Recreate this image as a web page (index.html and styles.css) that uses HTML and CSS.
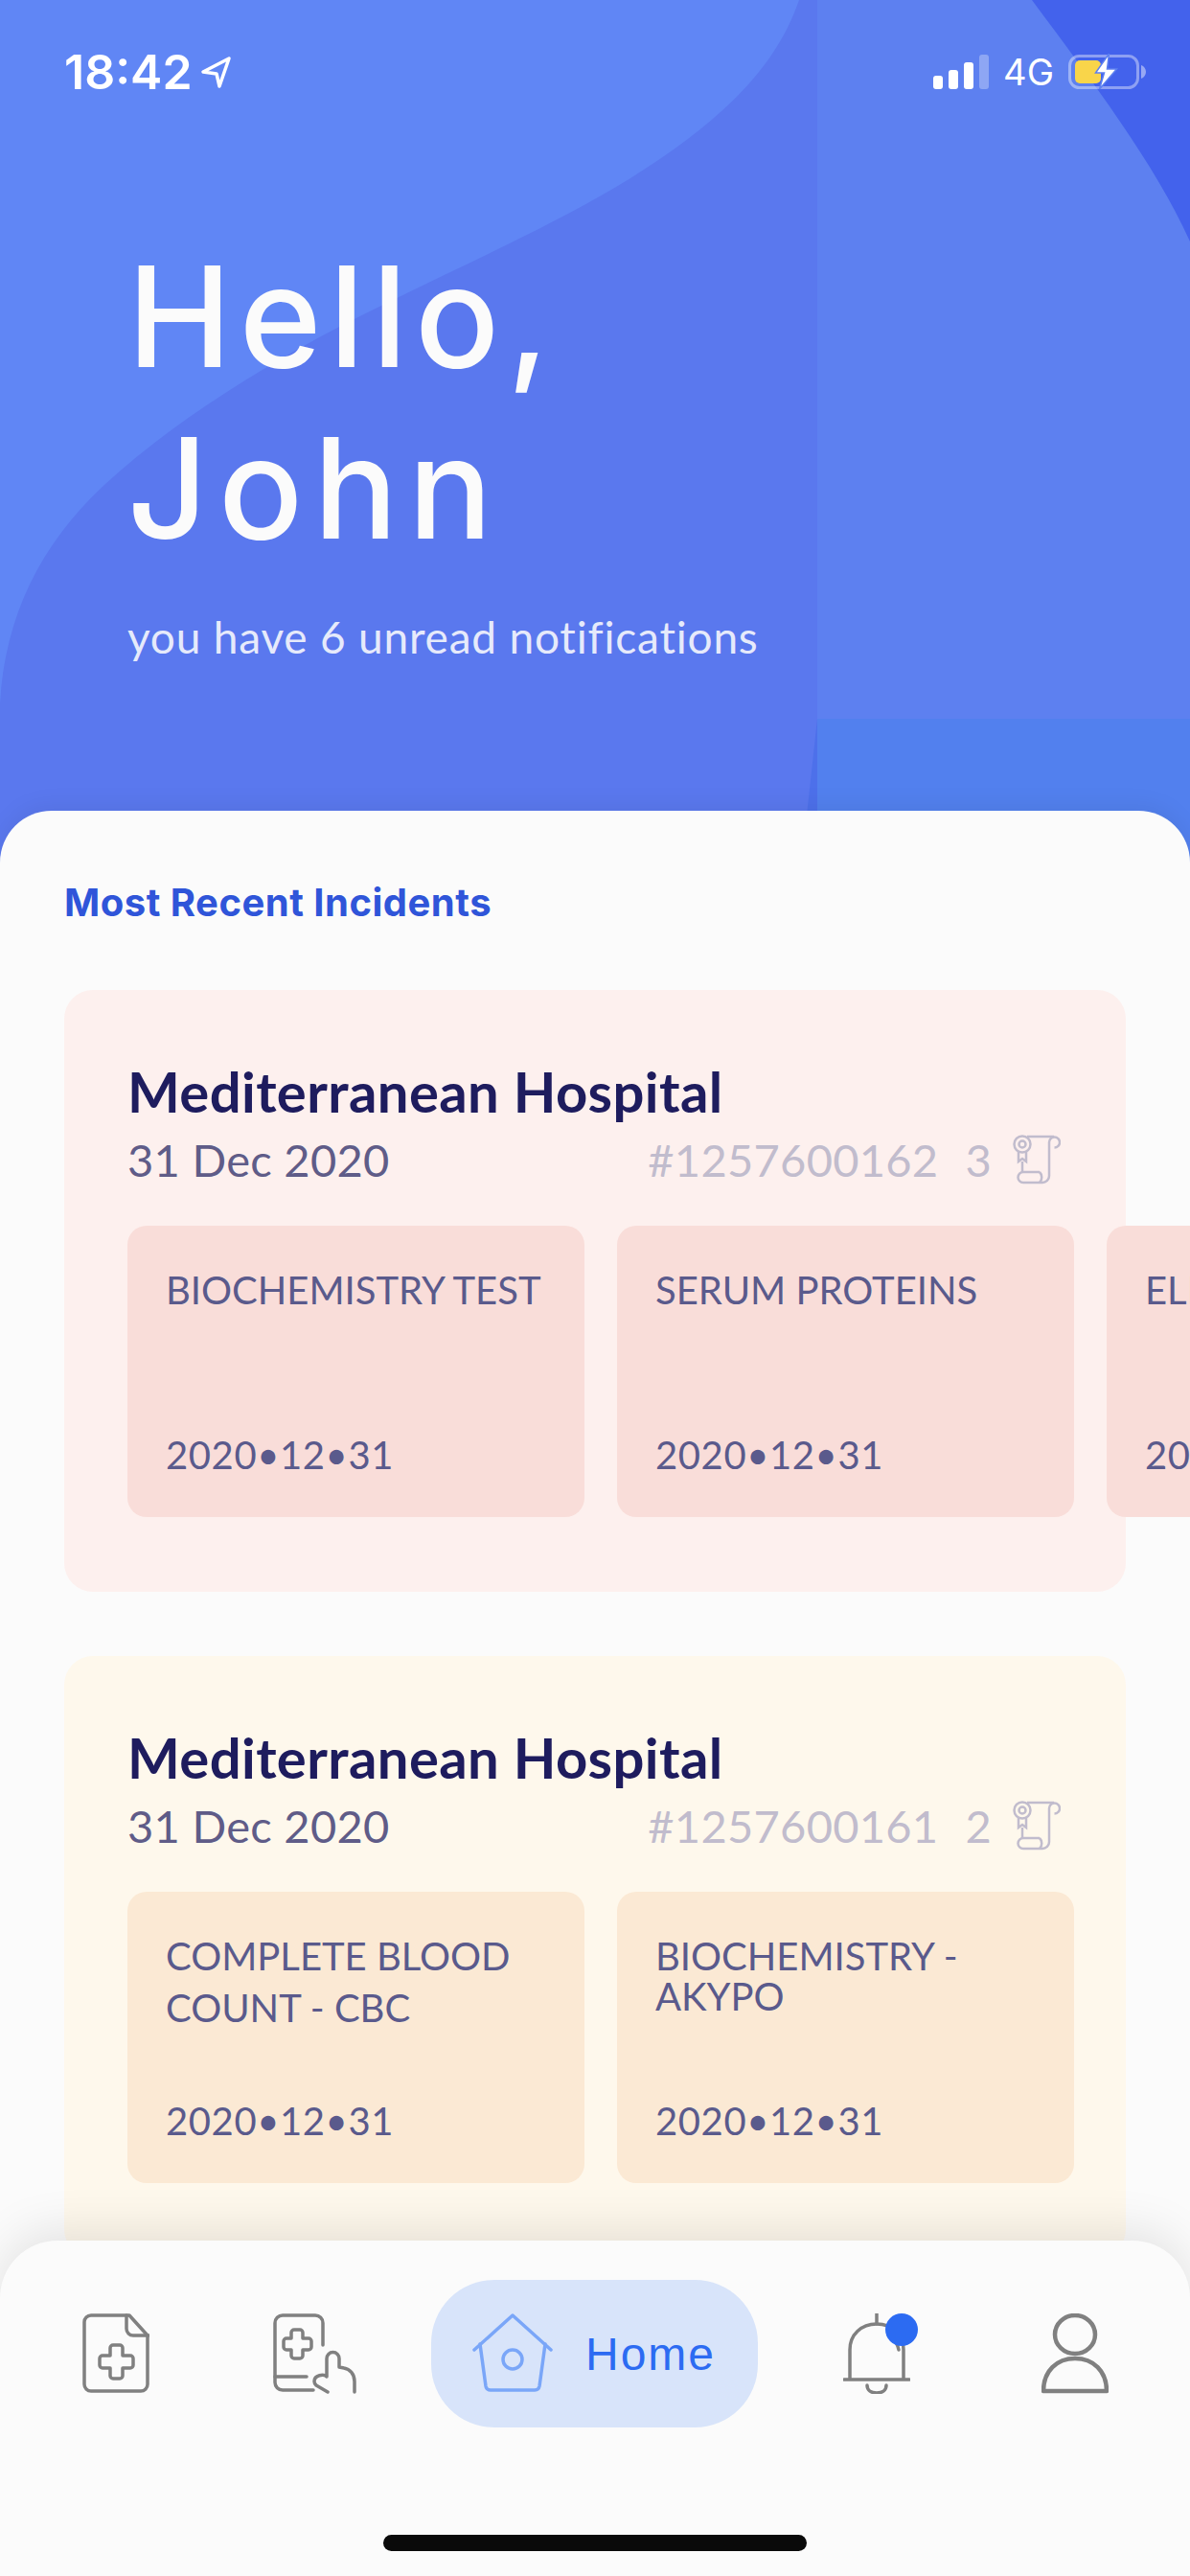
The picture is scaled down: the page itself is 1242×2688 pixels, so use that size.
FILE: index.html
```html
<!DOCTYPE html>
<html lang="en">
<head>
<meta charset="utf-8">
<title>Home</title>
<link rel="stylesheet" href="styles.css">
</head>
<body>
<div class="screen">
  <header class="hero">
    <svg class="blobs" viewBox="0 0 1242 906" preserveAspectRatio="none" aria-hidden="true">
      <rect x="853" width="389" height="750" fill="#5d80f0"/>
      <rect x="853" y="750" width="389" height="156" fill="#5280ee"/>
      <path d="M834 0C810 70 755 125 658 186C560 246 440 295 335 351C250 397 170 450 110 505C45 565 5 640 0 735V0Z" fill="#6086f5"/>
      <path d="M1077 0C1140 85 1205 170 1242 252V0Z" fill="#4362ec"/>
      <path d="M853 750L853 906H836Z" fill="#4d70ea"/>
    </svg>
    <div class="status">
      <div class="status-left">
        <span class="clock">18:42</span>
        <svg class="locate" viewBox="0 0 34 36" aria-hidden="true"><path d="M31 4L4 18L18 20L21 33Z"/></svg>
      </div>
      <div class="status-right">
        <div class="signal"><i class="b1"></i><i class="b2"></i><i class="b3"></i><i class="b4"></i></div>
        <span class="net">4G</span>
        <svg class="battery" viewBox="0 0 82 38" aria-hidden="true">
          <rect class="bat-shell" x="1.500" y="2.500" width="71" height="33" rx="10"/>
          <path class="bat-nub" d="M76 12c3 1 5 4 5 7s-2 6-5 7Z"/>
          <rect class="bat-fill" x="7" y="7" width="27" height="24" rx="5"/>
          <path class="bat-bolt" d="M42.500 0L28.500 20H37.500L32.500 37L50.500 16H40.500Z"/>
        </svg>
      </div>
    </div>
    <h1 class="greeting">Hello,<br><span class="greeting-name">John</span></h1>
    <p class="unread">you have 6 unread notifications</p>
  </header>

  <main class="sheet">
    <h2 class="section-title">Most Recent Incidents</h2>

    <article class="card card-rose">
      <h3 class="hospital">Mediterranean Hospital</h3>
      <div class="meta">
        <span class="date">31 Dec 2020</span>
        <span class="ref">#1257600162</span>
        <span class="count">3</span>
        <svg class="cert" viewBox="0 0 50 52" aria-hidden="true"><use href="#cert-icon"/></svg>
      </div>
      <div class="tiles">
        <div class="tile"><span class="tile-name">BIOCHEMISTRY TEST</span><span class="tile-date">2020•12•31</span></div>
        <div class="tile"><span class="tile-name">SERUM PROTEINS</span><span class="tile-date">2020•12•31</span></div>
        <div class="tile"><span class="tile-name">ELECTROLYTES</span><span class="tile-date">2020•12•31</span></div>
      </div>
    </article>

    <article class="card card-cream">
      <h3 class="hospital">Mediterranean Hospital</h3>
      <div class="meta">
        <span class="date">31 Dec 2020</span>
        <span class="ref">#1257600161</span>
        <span class="count">2</span>
        <svg class="cert" viewBox="0 0 50 52" aria-hidden="true"><use href="#cert-icon"/></svg>
      </div>
      <div class="tiles">
        <div class="tile"><span class="tile-name loose">COMPLETE BLOOD COUNT - CBC</span><span class="tile-date">2020•12•31</span></div>
        <div class="tile"><span class="tile-name">BIOCHEMISTRY - AKYPO</span><span class="tile-date">2020•12•31</span></div>
      </div>
    </article>
  </main>

  <nav class="tabbar">
    <div class="tabs">
      <svg class="tab-icon doc" viewBox="0 0 70 84" aria-hidden="true">
        <path d="M9 2H49L68 23V74a7 7 0 0 1-7 7H9a7 7 0 0 1-7-7V9a7 7 0 0 1 7-7Z"/>
        <path d="M46 2V16a7 7 0 0 0 7 7H69"/>
        <path d="M29 36a3 3 0 0 1 3-3h7a3 3 0 0 1 3 3v8h8a3 3 0 0 1 3 3v7a3 3 0 0 1-3 3h-8v8a3 3 0 0 1-3 3h-7a3 3 0 0 1-3-3v-8h-8a3 3 0 0 1-3-3v-7a3 3 0 0 1 3-3h8z"/>
      </svg>
      <svg class="tab-icon phone" viewBox="0 0 88 84" aria-hidden="true">
        <path d="M52 33V10a8 8 0 0 0-8-8H10a8 8 0 0 0-8 8V72a8 8 0 0 0 8 8H42"/>
        <path d="M2 66H35"/>
        <path d="M22 17a3 3 0 0 0-3 3v6h-5a3 3 0 0 0-3 3v6a3 3 0 0 0 3 3h5v6a3 3 0 0 0 3 3h6a3 3 0 0 0 3-3v-6h6a3 3 0 0 0 3-3v-6a3 3 0 0 0-3-3h-6v-6a3 3 0 0 0-3-3Z"/>
        <path d="M85 82V71c0-8-5-13-11-14l-5-1V47a6.500 6.500 0 0 0-13 0V66c-3-3-13-2-13 5 0 2 1 3 2 4l12 7"/>
      </svg>
      <div class="pill">
        <svg class="tab-icon home" viewBox="0 0 84 84" aria-hidden="true">
          <path d="M2 38L42 2L82 38"/>
          <path d="M8 32L14 76a5 5 0 0 0 5 4H65a5 5 0 0 0 5-4L76 32"/>
          <circle cx="42" cy="48" r="10"/>
        </svg>
        <span class="pill-label">Home</span>
      </div>
      <div class="bell-wrap">
        <svg class="tab-icon bell" viewBox="0 0 70 84" aria-hidden="true">
          <path d="M35 0V11"/>
          <path d="M7 68V38C7 22 19 11 35 11S63 22 63 38V68"/>
          <path d="M1 69H69"/>
          <path d="M25 75c0 5 4 8 10 8s10-3 10-8"/>
          <path d="M50 25c4 3 7 7 8 13"/>
        </svg>
        <span class="badge"></span>
      </div>
      <svg class="tab-icon person" viewBox="0 0 70 84" aria-hidden="true">
        <ellipse cx="35" cy="22" rx="21" ry="20"/>
        <path d="M2 81C2 60 16 47 35 47S68 60 68 81Z"/>
      </svg>
    </div>
    <div class="home-bar"></div>
  </nav>

  <svg class="defs" aria-hidden="true">
    <symbol id="cert-icon" viewBox="0 0 50 52">
      <circle cx="10" cy="10" r="8.500"/>
      <circle cx="10" cy="10" r="3.500"/>
      <path d="M6 18V28l4-3 4 3V18"/>
      <path d="M10 28V39"/>
      <path d="M15 2H43"/>
      <path d="M38 8a5.500 5.500 0 1 1 5.500 5.500"/>
      <path d="M38 8V43a7 7 0 0 1-7 7"/>
      <path d="M31 50H11a5.500 5.500 0 0 1 0-11H28"/>
      <path d="M28 39c3 3 3 8 0 11"/>
    </symbol>
  </svg>
</div>
</body>
</html>
```
FILE: styles.css
```css
* { box-sizing: border-box; }

html, body {
  margin: 0;
  padding: 0;
}

.screen {
  position: relative;
  width: 1242px;
  height: 2688px;
  overflow: hidden;
  background: #fbfbfb;
  font-family: "Lato", "Noto Sans", sans-serif;
}

.defs {
  position: absolute;
  width: 0;
  height: 0;
}

/* Hero */
.hero {
  position: relative;
  height: 906px;
  padding: 50px 45px 0 67px;
  background: #5a78ee;
  color: #fff;
}

.blobs {
  position: absolute;
  inset: 0;
  width: 100%;
  height: 100%;
}

.status {
  position: relative;
  display: flex;
  justify-content: space-between;
  align-items: center;
  height: 50px;
}

.status-left,
.status-right {
  display: flex;
  align-items: center;
}

.clock {
  font-family: "Inter", sans-serif;
  font-size: 50px;
  font-weight: 600;
  line-height: 50px;
}

.locate {
  width: 34px;
  height: 36px;
  margin-left: 7px;
  fill: none;
  stroke: #fff;
  stroke-width: 3.500;
  stroke-linejoin: round;
}

.signal {
  display: flex;
  align-items: flex-end;
  gap: 6px;
  height: 36px;
}

.signal i {
  display: block;
  width: 10px;
  border-radius: 3px;
  background: #fff;
}

.signal .b1 { height: 14px; }
.signal .b2 { height: 20px; }
.signal .b3 { height: 28px; }
.signal .b4 { height: 36px; background: rgba(255, 255, 255, 0.3); }

.net {
  margin-left: 15px;
  font-family: "Inter", sans-serif;
  font-size: 38px;
  line-height: 50px;
}

.battery {
  width: 82px;
  height: 38px;
  margin-left: 15px;
}

.bat-shell {
  fill: none;
  stroke: rgba(255, 255, 255, 0.4);
  stroke-width: 3;
}

.bat-nub { fill: rgba(255, 255, 255, 0.45); }
.bat-fill { fill: #f9d54a; }

.bat-bolt {
  fill: #fff;
  stroke: #5d80f0;
  stroke-width: 1.500;
}

.greeting {
  position: relative;
  margin: 141px 0 0 66px;
  font-family: "Inter", sans-serif;
  font-size: 146px;
  font-weight: 550;
  line-height: 179px;
  letter-spacing: 8px;
  color: #fbfbfb;
}

.greeting-name { letter-spacing: 11px; }

.unread {
  position: relative;
  margin: 39px 0 0 66px;
  font-size: 46px;
  line-height: 54px;
  letter-spacing: 0.800px;
  color: #e6eafb;
}

/* Sheet */
.sheet {
  position: relative;
  height: 1842px;
  margin-top: -60px;
  padding: 0 67px;
  overflow: hidden;
  border-radius: 54px 54px 0 0;
  background: #fbfbfb;
  box-shadow: 0 -6px 24px rgba(0, 0, 0, 0.06);
}

.section-title {
  margin: 0;
  padding-top: 72px;
  font-family: "Inter", sans-serif;
  font-size: 40px;
  font-weight: 700;
  line-height: 48px;
  letter-spacing: 0.500px;
  color: #2f55d9;
}

.card {
  height: 628px;
  margin-top: 67px;
  padding: 71px 0 0 66px;
  border-radius: 30px;
}

.card-rose { background: #fdf0ee; }
.card-cream { background: #fef8ec; }

.card-rose .tile { background: #f9ddd9; }
.card-cream .tile { background: #fbe9d4; }

.hospital {
  margin: 0;
  font-size: 58px;
  font-weight: 700;
  line-height: 70px;
  letter-spacing: 0.400px;
  color: #1e1c5e;
}

.meta {
  display: flex;
  align-items: center;
  height: 56px;
  margin-top: 8px;
  padding-right: 68px;
  font-size: 47px;
  line-height: 56px;
  letter-spacing: 0.300px;
}

.date {
  flex: 1;
  color: #5f5c88;
}

.ref { color: #c1bccd; }

.count {
  margin-left: 28px;
  color: #c1bccd;
}

.cert {
  width: 50px;
  height: 52px;
  margin-left: 22px;
  fill: none;
  stroke: #c1bccd;
  stroke-width: 2.500;
}

.tiles {
  display: flex;
  gap: 34px;
  margin-top: 41px;
  margin-right: -67px;
  overflow: hidden;
}

.tile {
  display: flex;
  flex: 0 0 477px;
  flex-direction: column;
  justify-content: space-between;
  height: 304px;
  padding: 46px 30px 41px 40px;
  border-radius: 20px;
  font-size: 40px;
  color: #5a5a8c;
}

.tile-name {
  display: block;
  line-height: 42px;
}

.tile-name.loose {
  margin-top: -6px;
  line-height: 54px;
}

.tile-date {
  display: block;
  line-height: 48px;
  letter-spacing: 0.600px;
}

/* Tab bar */
.tabbar {
  position: absolute;
  left: 0;
  right: 0;
  bottom: 0;
  height: 350px;
  padding-top: 41px;
  border-radius: 60px 60px 0 0;
  background: #fbfbfb;
  box-shadow: 0 -10px 50px rgba(0, 0, 0, 0.1);
}

.tabs {
  display: flex;
  align-items: center;
  height: 154px;
  padding-left: 86px;
}

.tab-icon {
  flex: none;
  height: 84px;
  fill: none;
  stroke: #808080;
  stroke-width: 3.500;
  stroke-linecap: round;
  stroke-linejoin: round;
}

.doc { width: 70px; }

.phone {
  width: 88px;
  margin-left: 129px;
}

.pill {
  display: flex;
  flex: none;
  align-items: center;
  width: 341px;
  height: 154px;
  margin-left: 77px;
  padding-left: 43px;
  border-radius: 66px;
  background: #d8e4fa;
}

.home {
  width: 84px;
  stroke: #7aa6f8;
}

.pill-label {
  margin-left: 34px;
  font-family: "Liberation Sans", sans-serif;
  font-size: 48px;
  letter-spacing: 2px;
  color: #2c6bf2;
}

.bell-wrap {
  position: relative;
  flex: none;
  width: 70px;
  height: 84px;
  margin-left: 89px;
}

.bell { width: 70px; }

.badge {
  position: absolute;
  left: 44px;
  top: 0;
  width: 34px;
  height: 34px;
  border-radius: 50%;
  background: #2c6bf2;
}

.person {
  width: 70px;
  margin-left: 137px;
  stroke-width: 4.500;
}

.home-bar {
  width: 442px;
  height: 17px;
  margin: 112px auto 0;
  border-radius: 9px;
  background: #0a0a0a;
}
```
